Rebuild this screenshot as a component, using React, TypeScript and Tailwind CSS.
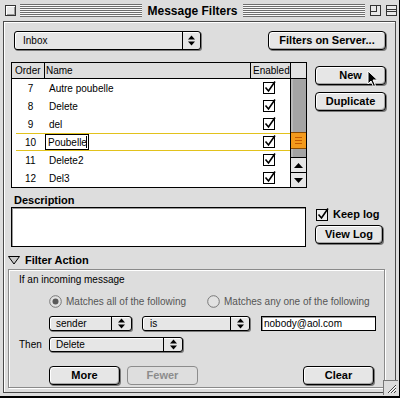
import type { ReactNode } from 'react'

const rows = [
  { n: 7, name: 'Autre poubelle' },
  { n: 8, name: 'Delete' },
  { n: 9, name: 'del' },
  { n: 10, name: 'Poubelle', editing: true },
  { n: 11, name: 'Delete2' },
  { n: 12, name: 'Del3' },
]

function UpDown() {
  return (
    <svg width="7" height="11" viewBox="0 0 7 11">
      <path d="M0 4.5 L3.5 0.5 L7 4.5 Z" fill="#000" />
      <path d="M0 6.5 L3.5 10.5 L7 6.5 Z" fill="#000" />
    </svg>
  )
}

function Check({ bg = '#fff' }: { bg?: string }) {
  return (
    <svg width="14" height="14" viewBox="0 0 14 14">
      <rect x="0.5" y="2.5" width="11" height="11" fill={bg} stroke="#000" />
      <path d="M2.5 7.5 L5.5 11 L12 1.5" fill="none" stroke="#000" strokeWidth="1.6" />
    </svg>
  )
}

function Button({ className, children, disabled }: { className: string; children: ReactNode; disabled?: boolean }) {
  return (
    <div
      className={`flex h-[19px] items-center justify-center rounded-[4px] border text-[11px] font-bold ${
        disabled
          ? 'border-[#8c8c8c] bg-[#dedede] text-[#8c8c8c]'
          : 'border-black bg-[#e6e6e6] text-black shadow-[inset_1px_1px_0_#fff,inset_-1px_-1px_0_#a6a6a6,1px_1px_0_#7a7a7a]'
      } ${className}`}
    >
      {children}
    </div>
  )
}

function Popup({ className, label, arrow, pad }: { className: string; label: string; arrow: string; pad: string }) {
  return (
    <div
      className={`flex rounded-[3px] border border-black bg-[#e6e6e6] shadow-[inset_1px_1px_0_#fff,1px_1px_0_#7a7a7a] ${className}`}
    >
      <div className={`flex flex-1 items-center text-[10px] ${pad}`}>{label}</div>
      <div className={`flex items-center justify-center border-l border-black ${arrow}`}>
        <UpDown />
      </div>
    </div>
  )
}

function Radio({ on }: { on?: boolean }) {
  return (
    <svg width="13" height="13" viewBox="0 0 13 13">
      <circle cx="6.5" cy="6.5" r="5.8" fill="#e2e2e2" stroke="#777" />
      {on && <circle cx="6.5" cy="6.5" r="3" fill="#595959" />}
    </svg>
  )
}

export default function App() {
  return (
    <div className="relative h-[398px] w-[400px] overflow-hidden border-r border-b-2 border-black bg-[#dddddd] font-['Liberation_Sans',Arial,sans-serif] text-black">
      {/* Title bar */}
      <div className="flex h-[21px] items-center pl-[5px] pr-[2px]">
        <div className="h-[11px] w-[11px] border border-[#333] bg-[#e8e8e8] shadow-[inset_1px_1px_0_#fff,inset_-1px_-1px_0_#999]" />
        <div className="ml-[4px] h-[13px] flex-1 bg-[repeating-linear-gradient(to_bottom,#6e6e6e_0_1px,#fafafa_1px_2px)]" />
        <div className="mx-[5px] text-[12px] font-bold leading-none">Message Filters</div>
        <div className="h-[13px] flex-1 bg-[repeating-linear-gradient(to_bottom,#6e6e6e_0_1px,#fafafa_1px_2px)]" />
        <div className="relative ml-[5px] h-[11px] w-[11px] border border-[#333] bg-[#e8e8e8]">
          <div className="h-[6px] w-[6px] border-r border-b border-[#333]" />
        </div>
        <div className="ml-[5px] flex h-[11px] w-[11px] flex-col justify-center border border-[#333] bg-[#e8e8e8]">
          <div className="h-[3px] border-y border-[#333]" />
        </div>
      </div>

      {/* Window body */}
      <div className="mx-[3px] flex h-[372px] flex-col border border-[#4a4a4a] shadow-[inset_1px_1px_0_#fff]">
        {/* Mailbox + server */}
        <div className="mt-[9px] flex">
          <Popup className="ml-[10px] h-[19px] w-[187px]" label="Inbox" pad="pl-[8px]" arrow="w-[18px]" />
          <Button className="ml-[67px] w-[118px]">Filters on Server...</Button>
        </div>

        {/* Filter list */}
        <div className="mt-[12px] flex">
          <div className="ml-[7px] flex h-[126px] w-[296px] border border-black bg-white">
            <div className="flex flex-1 flex-col">
              <div className="flex h-[16px] border-b border-black bg-[#dedede] text-[10px] leading-[15px]">
                <div className="w-[33px] border-r border-black pl-[3px]">Order</div>
                <div className="w-[206px] border-r border-black pl-[1px]">Name</div>
                <div className="flex-1 pl-[2px]">Enabled</div>
              </div>
              {rows.map((r) => (
                <div
                  key={r.n}
                  className={`ml-[4px] flex h-[18px] items-center border-y text-[10px] ${
                    r.editing ? 'border-[#e2c21c]' : 'border-transparent'
                  }`}
                >
                  <div className="w-[29px] text-center">{r.n}</div>
                  <div className="w-[206px]">
                    {r.editing ? (
                      <div className="flex h-[16px] w-[44px] items-center border border-black pl-[2px]">
                        {r.name}
                        <span className="ml-[-1px] h-[12px] w-px bg-black" />
                      </div>
                    ) : (
                      <span className="pl-[4px]">{r.name}</span>
                    )}
                  </div>
                  <div className="flex flex-1 justify-center pb-[2px]">
                    <Check />
                  </div>
                </div>
              ))}
            </div>
            {/* Scroll bar */}
            <div className="flex w-[17px] flex-col border-l border-black">
              <div className="h-[16px] border-b border-black bg-[#e2e2e2]" />
              <div className="h-[53px] bg-[#a4a4a4] shadow-[inset_2px_0_0_#b8b8b8]" />
              <div className="flex h-[17px] flex-col justify-center gap-[2px] border-y border-[#8a4a00] bg-[#f39a1c] px-[4px]">
                <div className="h-px bg-[#c45a00]" />
                <div className="h-px bg-[#c45a00]" />
                <div className="h-px bg-[#c45a00]" />
              </div>
              <div className="h-[8px] bg-[#a4a4a4] shadow-[inset_2px_0_0_#b8b8b8]" />
              <div className="flex h-[15px] items-center justify-center border-t border-black bg-[#e6e6e6]">
                <svg width="9" height="5" viewBox="0 0 9 5">
                  <path d="M0 5 L4.5 0 L9 5 Z" fill="#000" />
                </svg>
              </div>
              <div className="flex h-[15px] items-center justify-center border-t border-black bg-[#e6e6e6]">
                <svg width="9" height="5" viewBox="0 0 9 5">
                  <path d="M0 0 L4.5 5 L9 0 Z" fill="#000" />
                </svg>
              </div>
            </div>
          </div>
          <div className="ml-[8px] flex flex-col">
            <Button className="mt-[4px] w-[71px]">New</Button>
            <Button className="mt-[7px] w-[71px]">Duplicate</Button>
          </div>
        </div>

        {/* Description */}
        <div className="mt-[5px] flex">
          <div className="ml-[7px] flex w-[295px] flex-col">
            <div className="h-[14px] pl-[3px] text-[11px] font-bold leading-[14px]">Description</div>
            <div className="h-[40px] border border-black bg-white shadow-[inset_1px_1px_0_#999]" />
          </div>
          <div className="ml-[9px] flex flex-col pt-[14px]">
            <div className="flex h-[14px] items-center gap-[3px] pl-[1px] text-[11px] font-bold">
              <Check bg="#eeeeee" />
              Keep log
            </div>
            <Button className="mt-[4px] w-[68px]">View Log</Button>
          </div>
        </div>

        {/* Filter action */}
        <div className="mt-[6px] ml-[4px] flex h-[14px] items-center gap-[5px]">
          <svg width="12" height="9" viewBox="0 0 12 9">
            <path d="M0.5 0.5 L11.5 0.5 L6 8 Z" fill="#c9c9c9" stroke="#000" />
          </svg>
          <span className="text-[11px] font-bold">Filter Action</span>
        </div>

        <div className="mt-[2px] ml-[4px] flex h-[119px] w-[377px] flex-col border border-[#8a8a8a] shadow-[inset_1px_1px_0_#fff,1px_1px_0_#fff] text-[10px]">
          <div className="mt-[4px] h-[12px] pl-[10px] leading-[12px]">If an incoming message</div>

          <div className="mt-[9px] flex h-[13px] items-center text-[#555]">
            <div className="ml-[40px] flex w-[158px] items-center gap-[4px]">
              <Radio on />
              Matches all of the following
            </div>
            <div className="flex items-center gap-[4px]">
              <Radio />
              Matches any one of the following
            </div>
          </div>

          <div className="mt-[8px] flex h-[15px]">
            <Popup className="ml-[40px] w-[83px]" label="sender" pad="pl-[6px]" arrow="w-[20px]" />
            <Popup className="ml-[10px] w-[108px]" label="is" pad="pl-[7px]" arrow="w-[19px]" />
            <div className="ml-[11px] flex w-[115px] items-center border border-black bg-white pl-[2px] shadow-[inset_1px_1px_0_#999]">
              nobody@aol.com
            </div>
          </div>

          <div className="mt-[6px] flex h-[15px] items-center">
            <div className="w-[40px] pl-[10px]">Then</div>
            <Popup className="h-[15px] w-[134px]" label="Delete" pad="pl-[6px]" arrow="w-[19px]" />
          </div>

          <div className="mt-[14px] flex">
            <Button className="ml-[40px] w-[71px]">More</Button>
            <Button className="ml-[7px] w-[71px]" disabled>
              Fewer
            </Button>
            <Button className="ml-[105px] w-[71px]">Clear</Button>
          </div>
        </div>
      </div>

      {/* Grow box */}
      <div className="absolute right-[1px] bottom-[1px] h-[15px] w-[15px] border-t border-l border-[#777] bg-[#dddddd]">
        <svg width="14" height="14" viewBox="0 0 14 14">
          <path d="M4 12 L12 4 M7 12 L12 7 M10 12 L12 10" stroke="#444" strokeWidth="1" />
          <path d="M5 12 L12 5 M8 12 L12 8" stroke="#fff" strokeWidth="1" />
        </svg>
      </div>

      {/* Pointer */}
      <svg className="absolute left-[367px] top-[70px]" width="12" height="18" viewBox="0 0 12 18">
        <path d="M1 1 L1 14 L4 11 L6.5 16.5 L8.5 15.5 L6 10 L10.5 10 Z" fill="#000" stroke="#fff" strokeWidth="1" />
      </svg>
    </div>
  )
}
